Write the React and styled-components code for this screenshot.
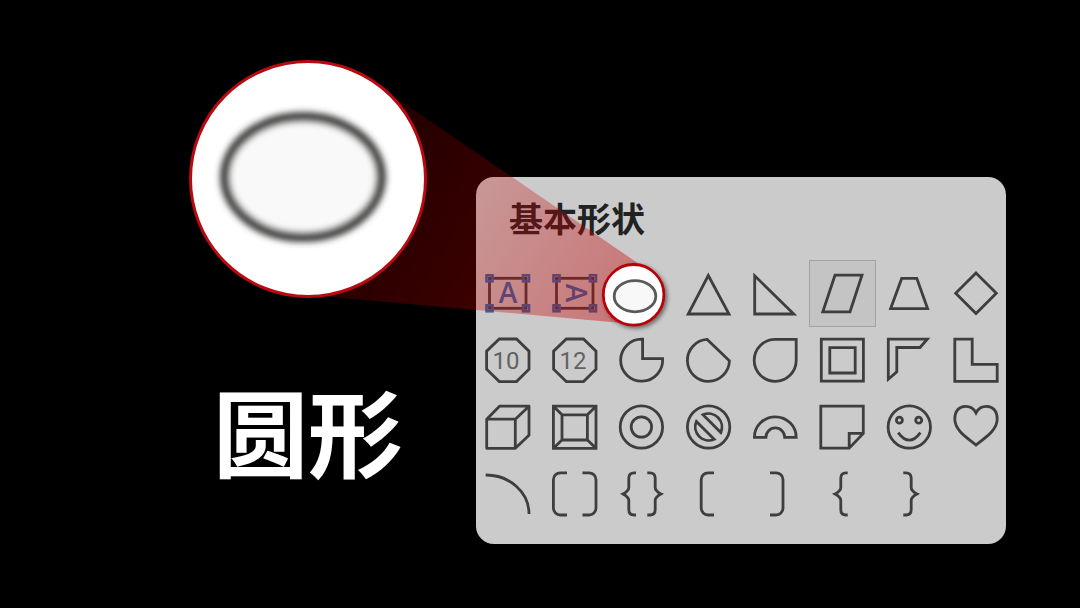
import styled, { createGlobalStyle } from "styled-components";

const GlobalStyle = createGlobalStyle`
  * {
    box-sizing: border-box;
  }

  body {
    margin: 0;
    background: #000;
    font-family: "Noto Sans CJK SC", "Noto Sans", sans-serif;
  }
`;

const Stage = styled.main`
  position: relative;
  min-height: 100vh;
  display: grid;
  grid-template-columns: 238px minmax(530px, 1fr);
  align-items: start;
  gap: 49px;
  padding: 60px 74px 64px 189px;
`;

const Zoomed = styled.figure`
  margin: 0;
  display: flex;
  flex-direction: column;
  align-items: center;
  gap: 62px;
`;

const Lens = styled.div`
  position: relative;
  z-index: 2;
  width: 238px;
  height: 238px;
  border: 3px solid #b80a10;
  border-radius: 50%;
  background: #fff;
  overflow: hidden;
`;

const ShapeName = styled.figcaption`
  color: #fff;
  font-size: 95px;
  font-weight: 700;
  line-height: 140px;
  white-space: nowrap;
`;

const Panel = styled.section`
  margin-top: 117px;
  padding: 15px 0 16px;
  border-radius: 18px;
  background: #cbcbcb;
`;

const Title = styled.h2`
  margin: 0 0 16px;
  padding-left: 33px;
  color: #222;
  font-size: 34px;
  font-weight: 700;
  line-height: 52px;
`;

const ShapeGrid = styled.div`
  display: grid;
  grid-template-columns: repeat(8, 67px);
  grid-auto-rows: 67px;
  margin: 0 -4px 0 -2px;
`;

const ShapeButton = styled.button`
  padding: 0;
  border: 0;
  background: ${(props) => (props.$selected ? "#c4c4c4" : "transparent")};
  box-shadow: ${(props) => (props.$selected ? "inset 0 0 0 1px #a2a2a2" : "none")};
`;

const Glyph = styled.svg`
  display: block;
  width: 67px;
  height: 67px;
  fill: none;
  stroke: #3e3e3e;
  stroke-width: 2.8;

  text {
    stroke: none;
    fill: #626262;
    font-family: "Liberation Sans Narrow", Roboto, sans-serif;
    font-size: 24px;
    text-anchor: middle;
  }
`;

const Overlay = styled.svg`
  position: absolute;
  top: 0;
  left: 0;
  z-index: 1;
  pointer-events: none;
`;

function TextBox({ vertical }) {
  return (
    <>
      <rect x="15.5" y="18.3" width="36.5" height="30" />
      <g stroke="#2c68ac" strokeWidth="2.6">
        <rect x="12.5" y="15.3" width="6" height="6" />
        <rect x="49" y="15.3" width="6" height="6" />
        <rect x="12.5" y="45.3" width="6" height="6" />
        <rect x="49" y="45.3" width="6" height="6" />
      </g>
      <text
        x="34"
        y="43"
        transform={vertical ? "rotate(90 34.5 33.5)" : undefined}
        style={{
          fill: "#2c68ac",
          fontFamily: '"Open Sans", sans-serif',
          fontSize: 28,
          fontWeight: 600,
        }}
      >
        A
      </text>
    </>
  );
}

function Octagon({ label }) {
  return (
    <>
      <path d="M25.3 12H42.5L55 24.2V42.2L42.5 54.6H25.3L12.6 42.2V24.2Z" />
      <text x="32" y="42">
        {label}
      </text>
    </>
  );
}

const shapes = [
  { name: "文本框", art: <TextBox /> },
  { name: "竖排文本框", art: <TextBox vertical /> },
  { name: "椭圆", art: <ellipse cx="30" cy="35" rx="20" ry="15" /> },
  { name: "等腰三角形", art: <path d="M33.3 15.5L54 54H13.2Z" /> },
  { name: "直角三角形", art: <path d="M12.7 15.8V54H51.8Z" /> },
  {
    name: "平行四边形",
    selected: true,
    art: <path d="M26 15.2H53L41 51.8H13.8Z" />,
  },
  { name: "梯形", art: <path d="M25.7 18.4H40.8L51.6 48.7H14.6Z" /> },
  { name: "菱形", art: <path d="M33 13L53.3 33.3L33 53.6L12.7 33.3Z" /> },
  { name: "十边形", art: <Octagon label="10" /> },
  { name: "十二边形", art: <Octagon label="12" /> },
  { name: "不完整圆", art: <path d="M34.6 12.2V31.7H54.6A21 21 0 1 1 34.6 12.2Z" /> },
  { name: "弦形", art: <path d="M32.2 12.4L54.4 33.8A21 21 0 1 1 32.2 12.4Z" /> },
  { name: "泪滴形", art: <path d="M33.2 12.3H54.2V33.4A21 21 0 1 1 33.2 12.3Z" /> },
  {
    name: "图文框",
    art: <path d="M12.3 12.2H54.4V54.2H12.3ZM20.8 20.7H46.2V46H20.8Z" />,
  },
  { name: "半闭框", art: <path d="M12.3 12.2H51.3L44 20.5H20.8V44.8L12.3 52.2Z" /> },
  { name: "L 形", art: <path d="M11.8 12.2H29.2V37.4H54.2V54.4H11.8Z" /> },
  {
    name: "立方体",
    art: (
      <path
        strokeLinejoin="round"
        d="M12.7 25.2H41.3V54.3H12.7ZM12.7 25.2L25.5 12.2H55V41.2L41.3 54.3M41.3 25.2L55 12.2"
      />
    ),
  },
  {
    name: "棱台",
    art: (
      <path d="M12.4 12.2H55V54.3H12.4ZM21 20.8H46.4V46H21ZM12.4 12.2L21 20.8M55 12.2L46.4 20.8M55 54.3L46.4 46M12.4 54.3L21 46" />
    ),
  },
  {
    name: "圆环",
    art: (
      <>
        <circle cx="33.4" cy="33" r="21.2" />
        <circle cx="33.4" cy="33" r="10.2" />
      </>
    ),
  },
  {
    name: "禁止符",
    art: (
      <>
        <circle cx="33.6" cy="33" r="21.2" />
        <path d="M28 20.8A13.5 13.5 0 0 1 45.8 38.6ZM39.2 45.2A13.5 13.5 0 0 1 21.4 27.4Z" />
      </>
    ),
  },
  {
    name: "空心弧",
    art: <path d="M12.4 43.3A20.9 20.5 0 0 1 54.2 43.3H42.7A9.4 9.4 0 0 0 23.9 43.3Z" />,
  },
  {
    name: "折角形",
    art: <path d="M11.8 12.2H54.3V39.4L40.2 54.2H11.8ZM54.3 39.4H40.2V54.2" />,
  },
  {
    name: "笑脸",
    art: (
      <>
        <circle cx="33.3" cy="33" r="21.2" />
        <circle cx="23.4" cy="26.2" r="3" />
        <circle cx="42.7" cy="26.2" r="3" />
        <path d="M22.2 38.6Q33.3 53.8 44.4 38.6" />
      </>
    ),
  },
  {
    name: "心形",
    art: (
      <path d="M33 51C27 45.5 11.8 37.5 11.8 25C11.8 16.5 16.5 12.3 22.3 12.3C27.5 12.3 31 14.5 33 18.8C35 14.5 38.5 12.3 43.7 12.3C49.5 12.3 54.2 16.5 54.2 25C54.2 37.5 39 45.5 33 51Z" />
    ),
  },
  { name: "弧形", art: <path d="M11.7 14A43 39 0 0 1 55 53" /> },
  {
    name: "双括号",
    art: (
      <path d="M26 11.8H19.4A7 7 0 0 0 12.4 18.8V47A7 7 0 0 0 19.4 54H26M41.5 11.8H48A7 7 0 0 1 55 18.8V47A7 7 0 0 1 48 54H41.5" />
    ),
  },
  {
    name: "双大括号",
    art: (
      <path d="M28 11.8H26Q20.8 11.8 20.8 17V26.5Q20.8 30 15 32.9Q20.8 36 20.8 39.3V48.8Q20.8 54 26 54H28M39.3 11.8H42Q47.2 11.8 47.2 17V26.5Q47.2 30 53 32.9Q47.2 36 47.2 39.3V48.8Q47.2 54 42 54H39.3" />
    ),
  },
  { name: "左中括号", art: <path d="M39 11.8H33.2A7 7 0 0 0 26.2 18.8V47A7 7 0 0 0 33.2 54H39" /> },
  { name: "右中括号", art: <path d="M28 11.8H34A7 7 0 0 1 41 18.8V47A7 7 0 0 1 34 54H28" /> },
  {
    name: "左大括号",
    art: (
      <path d="M38.7 11.8H37Q31.8 11.8 31.8 17V26.5Q31.8 30 26 32.9Q31.8 36 31.8 39.3V48.8Q31.8 54 37 54H38.7" />
    ),
  },
  {
    name: "右大括号",
    art: (
      <path d="M27.3 11.8H30Q35.2 11.8 35.2 17V26.5Q35.2 30 41 32.9Q35.2 36 35.2 39.3V48.8Q35.2 54 30 54H27.3" />
    ),
  },
];

function Magnified() {
  return (
    <Lens>
      <svg width="232" height="232" viewBox="0 0 232 232" aria-hidden="true">
        <defs>
          <filter id="soft" x="-20%" y="-20%" width="140%" height="140%">
            <feGaussianBlur stdDeviation="3.2" />
          </filter>
        </defs>
        <ellipse
          cx="111"
          cy="114"
          rx="78"
          ry="60"
          fill="#f9f9f9"
          stroke="#3c3e3a"
          strokeWidth="10"
          filter="url(#soft)"
        />
      </svg>
    </Lens>
  );
}

function Callout() {
  return (
    <Overlay width="680" height="340" viewBox="0 0 680 340" aria-hidden="true">
      <defs>
        <linearGradient
          id="beam"
          gradientUnits="userSpaceOnUse"
          x1="350"
          y1="120"
          x2="634"
          y2="295"
        >
          <stop offset="0" stopColor="#c00000" stopOpacity="0.15" />
          <stop offset="1" stopColor="#c40000" stopOpacity="0.41" />
        </linearGradient>
        <filter id="drop" x="-30%" y="-30%" width="160%" height="160%">
          <feDropShadow dx="2" dy="2" stdDeviation="2" floodOpacity="0.5" />
        </filter>
      </defs>
      <path d="M360 73L642 266L622 323L320 296Z" fill="url(#beam)" />
      <circle
        cx="633.6"
        cy="294.8"
        r="30.3"
        fill="#fff"
        stroke="#b80408"
        strokeWidth="2.8"
        filter="url(#drop)"
      />
      <ellipse
        cx="635"
        cy="296.2"
        rx="20.8"
        ry="15.6"
        fill="#f8f8f8"
        stroke="#5a5a5a"
        strokeWidth="2.8"
      />
    </Overlay>
  );
}

function App() {
  return (
    <>
      <GlobalStyle />
      <Stage>
        <Zoomed>
          <Magnified />
          <ShapeName>圆形</ShapeName>
        </Zoomed>
        <Panel>
          <Title>基本形状</Title>
          <ShapeGrid>
            {shapes.map((shape) => (
              <ShapeButton
                key={shape.name}
                type="button"
                aria-label={shape.name}
                $selected={shape.selected}
              >
                <Glyph viewBox="0 0 67 67">{shape.art}</Glyph>
              </ShapeButton>
            ))}
          </ShapeGrid>
        </Panel>
        <Callout />
      </Stage>
    </>
  );
}

export default App;
